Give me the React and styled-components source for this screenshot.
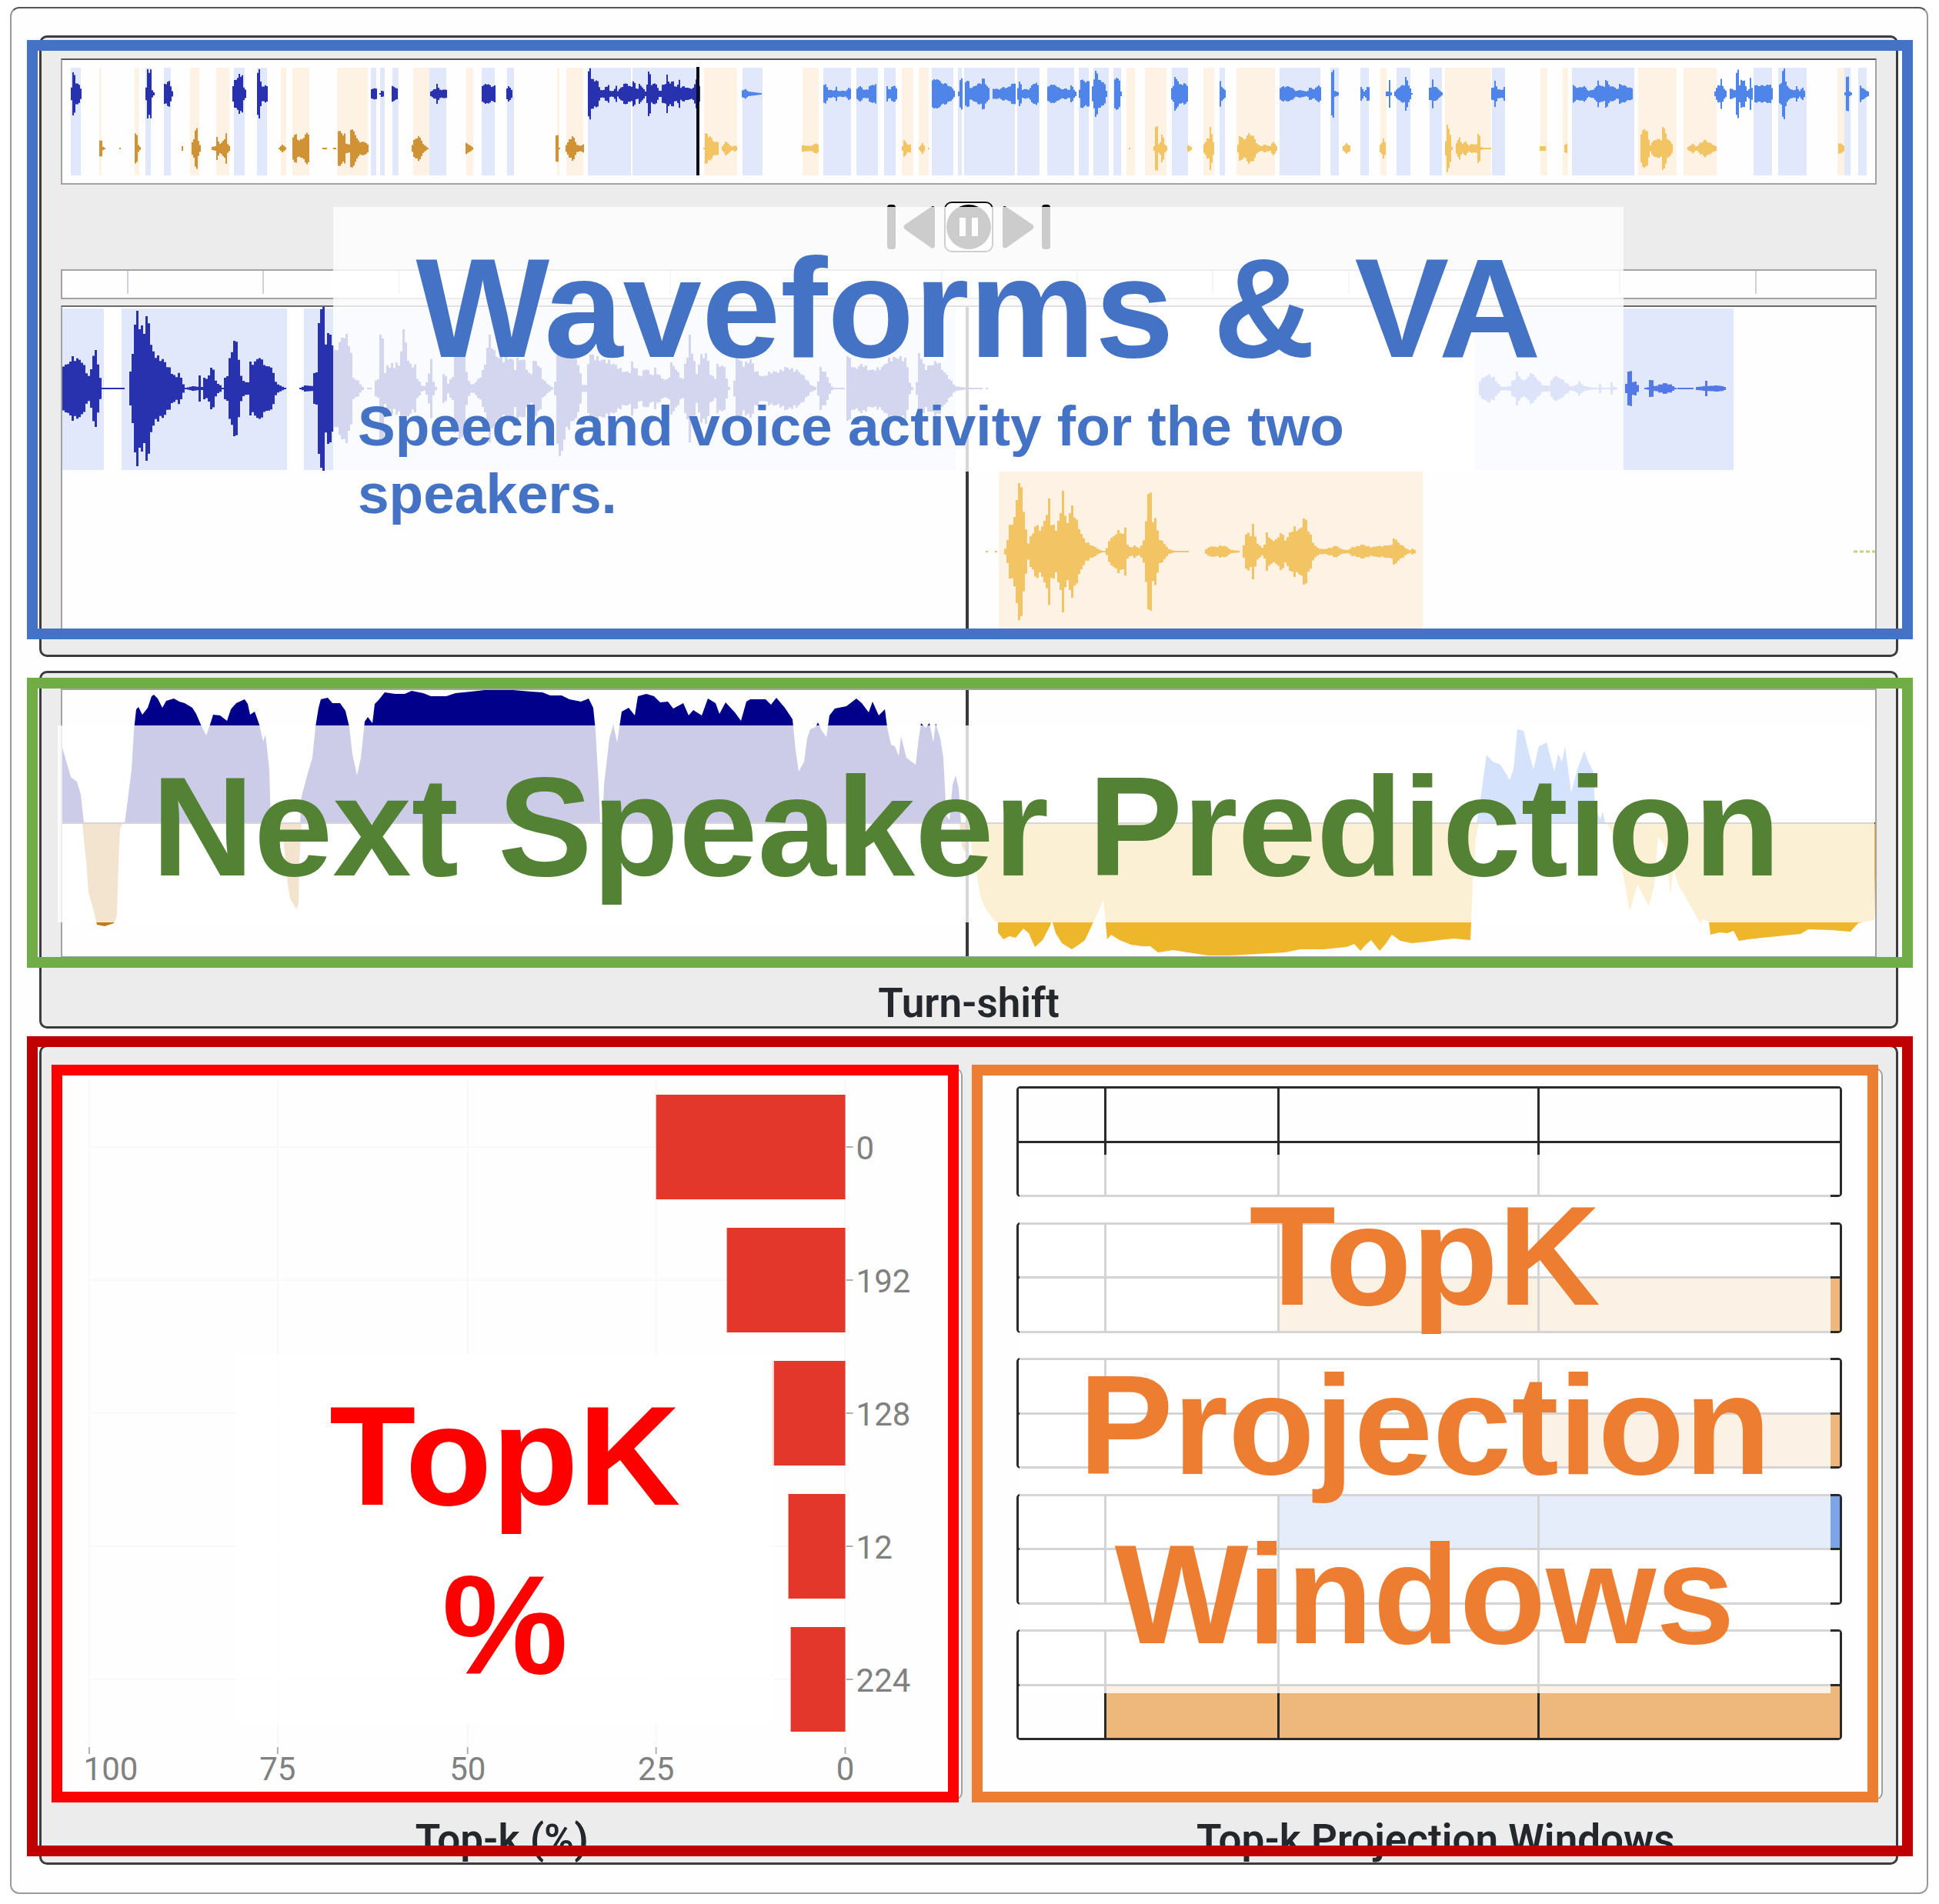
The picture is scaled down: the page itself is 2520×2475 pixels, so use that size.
import React from "react";
import styled, { createGlobalStyle } from "styled-components";

const GlobalStyle = createGlobalStyle`
  *, *::before, *::after { box-sizing: border-box; }
  body { margin: 0; background: #fff; }
`;

const C = {
  blue: "#4472c4",
  green: "#70ad47",
  greenText: "#548235",
  crimson: "#c00000",
  red: "#ff0000",
  orange: "#ed7d31",
  navyWave: "#2832ae",
  skyWave: "#4f84e8",
  amberWave: "#cf9335",
  goldWave: "#f3c463",
};

const Page = styled.div`
  padding: 9px 14px 12px 13px;
  font-family: Roboto, "Liberation Sans", sans-serif;
  color: #24272b;
`;

const Shell = styled.main`
  display: flex;
  flex-direction: column;
  gap: 18px;
  padding: 35px 37px 36px 36px;
  border: 2px solid #9a9a9a;
  border-top-color: #555;
  border-radius: 12px;
  background: #fefefe;
`;

const Panel = styled.section`
  position: relative;
  border: 3px solid #3c3c3c;
  border-radius: 10px;
  background: #ececec;
  padding: ${(p) => p.$pad || "0"};
  margin-top: ${(p) => p.$gap || "0"};
`;

const Plot = styled.div`
  border: 2px solid ${(p) => p.$edge || "#a3a3a3"};
  border-top-color: ${(p) => p.$top || "#6b6b6b"};
  background: #fefefe;
  height: ${(p) => p.$h};
  margin-top: ${(p) => p.$gap || "0"};
`;

const Drawing = styled.svg`
  display: block;
  width: 100%;
  height: 100%;
`;

const Controls = styled.div`
  height: 110px;
  display: flex;
  justify-content: center;
  align-items: center;
  gap: 12px;
`;

const IconButton = styled.button`
  display: flex;
  align-items: center;
  justify-content: center;
  width: ${(p) => p.$w};
  height: 66px;
  padding: 0;
  border: ${(p) => (p.$active ? "2px solid #111" : "0")};
  border-radius: 10px;
  background: ${(p) => (p.$active ? "#fff" : "transparent")};
`;

const PanelTitle = styled.h2`
  margin: 0;
  text-align: center;
  font-size: 53px;
  line-height: 60px;
  font-weight: 600;
  padding: ${(p) => p.$pad || "0"};
`;

const Columns = styled.div`
  display: grid;
  grid-template-columns: 1fr 1fr;
  gap: 17px;
`;

const Column = styled.div`
  position: relative;
`;

const Card = styled.div`
  margin: ${(p) => p.$margin};
  height: 952px;
  border: 2px solid #a0a0a0;
  border-radius: 10px;
  background: #fefefe;
`;

const WindowList = styled(Card)`
  display: flex;
  flex-direction: column;
  justify-content: space-between;
  padding: 22px 51px 76px 51px;
`;

const WindowGrid = styled.div`
  height: 144px;
  display: grid;
  grid-template-columns: 112fr 224fr 337fr 392fr;
  grid-template-rows: 1fr 1fr;
  gap: 3px;
  border: 3px solid #2a2a2a;
  border-radius: 5px;
  background: #2a2a2a;
`;

const Cell = styled.div`
  background: ${(p) => p.$fill};
`;

/* Callouts drawn over the panels */
const Frame = styled.div`
  position: absolute;
  inset: ${(p) => p.$inset};
  border: 14px solid ${(p) => p.$color};
  pointer-events: none;
`;

const Note = styled.div`
  position: absolute;
  inset: ${(p) => p.$inset};
  height: ${(p) => p.$h};
  padding: 21px 32px 0;
  background: rgba(255, 255, 255, 0.8);
  color: ${(p) => p.$color};
  font-family: "Liberation Sans", Arial, sans-serif;
  font-weight: 700;
`;

const NoteTitle = styled.h1`
  margin: 0;
  font-size: 184px;
  line-height: 220px;
  text-align: center;
`;

const NoteText = styled.p`
  margin: 0;
  font-size: 73px;
  line-height: 88px;
`;

/* Each burst is a flat list: x, amplitude, x, amplitude ...
   It is drawn as a row of mirrored bars, one bar per sample step. */
function burstPath(burst, mid, step) {
  const n = burst.length;
  const end = burst[n - 2];
  const at = (x) => {
    for (let i = 0; i + 3 < n; i += 2) {
      const x0 = burst[i];
      const x1 = burst[i + 2];
      if (x >= x0 && x <= x1) {
        const t = x1 === x0 ? 1 : (x - x0) / (x1 - x0);
        return burst[i + 1] + t * (burst[i + 3] - burst[i + 1]);
      }
    }
    return burst[n - 1];
  };
  const tops = [];
  const bottoms = [];
  for (let x = burst[0]; x < end + 1; x += step) {
    let a = at(Math.min(x, end));
    let peak = false;
    for (let i = 0; i < n; i += 2) {
      if (burst[i] >= x && burst[i] < x + step && burst[i + 1] > a) {
        a = burst[i + 1];
        peak = true;
      }
    }
    const wobble = peak || a < 4 ? 1 : 0.84 + 0.2 * Math.abs(Math.sin(x * 12.9898));
    const h = Math.max(1, a * wobble);
    tops.push(`${x} ${mid - h}L${x + step} ${mid - h}`);
    bottoms.unshift(`${x + step} ${mid + h}L${x} ${mid + h}`);
  }
  return `M${tops.join("L")}L${bottoms.join("L")}Z`;
}

function Wave({ bursts, mid, color, step = 2 }) {
  return <path d={bursts.map((b) => burstPath(b, mid, step)).join("")} fill={color} />;
}

function Spans({ spans, y, height, color }) {
  return spans.map(([a, b]) => (
    <rect key={a} x={a} y={y} width={b - a} height={height} fill={color} />
  ));
}

const speechA = [
  [92, 105], [189, 196], [213, 222], [304, 318], [334, 347], [482, 489], [494, 500], [510, 518],
  [558, 580], [626, 643], [659, 668], [764, 820], [822, 909], [965, 991], [1070, 1106], [1113, 1141],
  [1149, 1164], [1211, 1239], [1245, 1250], [1253, 1319], [1322, 1351], [1361, 1396], [1402, 1415],
  [1421, 1441], [1447, 1457], [1523, 1544], [1585, 1592], [1663, 1716], [1729, 1740], [1768, 1779],
  [1815, 1833], [1858, 1874], [1939, 1956], [2043, 2124], [2279, 2303], [2311, 2348], [2397, 2405],
  [2415, 2426],
];

const speechB = [
  [129, 132], [175, 181], [247, 259], [281, 298], [365, 372], [380, 402], [438, 478], [537, 558],
  [606, 615], [724, 727], [736, 758], [915, 958], [1043, 1064], [1172, 1187], [1194, 1207],
  [1464, 1475], [1488, 1516], [1564, 1578], [1607, 1657], [1794, 1802], [1878, 1938], [2002, 2011],
  [2031, 2038], [2129, 2179], [2188, 2231], [2388, 2397],
];

const overviewPastA = [
  [92, 8, 94, 10, 95, 28, 97, 28, 98, 14, 102, 12, 104, 8],
  [189, 8, 191, 12, 192, 32, 195, 32, 196, 6, 199, 2],
  [213, 13, 217, 16, 220, 16, 221, 10, 223, 4],
  [302, 10, 305, 18, 308, 20, 310, 27, 314, 24, 316, 8, 319, 5],
  [334, 32, 336, 32, 337, 18, 340, 10, 344, 11, 347, 9],
  [482, 7, 488, 7], [493, 1, 496, 4, 498, 4], [509, 10, 511, 10, 516, 6],
  [559, 3, 564, 6, 567, 8, 568, 13, 569, 8, 573, 5, 579, 6],
  [626, 10, 631, 13, 640, 10, 643, 11], [658, 7, 661, 10, 664, 5],
  [764, 34, 766, 34, 767, 18, 770, 20, 776, 16, 779, 6, 783, 4, 787, 9, 790, 11, 792, 4, 797, 4, 800, 11,
    802, 4, 806, 8, 811, 13, 815, 13, 821, 8, 822, 17, 825, 16, 826, 7, 829, 6, 831, 13, 834, 8, 837, 5,
    838, 3, 841, 12, 842, 28, 844, 26, 846, 13, 853, 13, 855, 4, 859, 4, 860, 13, 866, 12, 867, 25, 869, 13,
    874, 17, 877, 8, 881, 12, 882, 20, 883, 8, 888, 10, 895, 7, 901, 8, 904, 20, 906, 20, 909, 5],
];

const overviewNextA = [
  [964, 5, 968, 6, 972, 3, 988, 1],
  [1070, 12, 1073, 12, 1075, 6, 1083, 4, 1086, 9, 1088, 4, 1098, 4, 1103, 8, 1105, 6],
  [1113, 8, 1118, 10, 1122, 5, 1127, 6, 1130, 10, 1135, 13, 1138, 13],
  [1152, 10, 1155, 4, 1158, 10, 1162, 10, 1165, 7],
  [1211, 18, 1218, 19, 1222, 15, 1229, 13, 1235, 9, 1239, 5],
  [1245, 3, 1247, 20, 1249, 20, 1250, 2],
  [1254, 18, 1258, 16, 1260, 8, 1266, 10, 1270, 14, 1276, 12, 1277, 20, 1278, 20, 1280, 12, 1285, 8],
  [1290, 7, 1297, 6, 1304, 9, 1309, 8, 1315, 13, 1318, 13, 1319, 10],
  [1322, 8, 1325, 16, 1328, 6, 1337, 6, 1342, 14, 1346, 14, 1349, 10],
  [1361, 9, 1366, 12, 1372, 11, 1378, 6, 1384, 7, 1390, 5, 1392, 11, 1397, 3],
  [1402, 6, 1405, 18, 1414, 16, 1415, 8],
  [1419, 10, 1421, 18, 1424, 18, 1424, 30, 1426, 30, 1427, 18, 1434, 16, 1437, 4],
  [1448, 20, 1454, 20, 1456, 3],
  [1522, 8, 1526, 12, 1527, 22, 1529, 22, 1531, 12, 1538, 14, 1543, 10],
  [1585, 16, 1587, 10, 1591, 5],
  [1663, 8, 1668, 10, 1678, 9, 1682, 4, 1690, 5, 1697, 3, 1702, 8, 1706, 6, 1714, 11, 1716, 8],
  [1730, 30, 1732, 30, 1733, 4, 1739, 2], [1768, 9, 1772, 3, 1777, 9, 1779, 8],
  [1801, 3, 1804, 3, 1805, 18, 1806, 18, 1807, 2], [1812, 3, 1818, 10, 1826, 12, 1827, 22, 1829, 12, 1832, 8, 1834, 1],
  [1857, 8, 1860, 8, 1861, 20, 1863, 10, 1868, 7, 1873, 2],
  [1938, 8, 1942, 8, 1943, 17, 1945, 6, 1951, 5, 1955, 9],
  [2044, 11, 2050, 8, 2058, 10, 2064, 4, 2068, 5, 2075, 10, 2076, 18, 2079, 10, 2086, 10, 2087, 18, 2090, 12,
    2096, 9, 2103, 6, 2105, 13, 2112, 10, 2121, 7],
  [2228, 3, 2232, 12, 2235, 12, 2236, 19, 2238, 10, 2243, 3],
  [2248, 8, 2252, 5, 2255, 5, 2256, 31, 2258, 31, 2259, 6, 2262, 20, 2267, 16, 2269, 4, 2273, 6, 2274, 20, 2276, 8],
  [2280, 11, 2290, 11, 2301, 12, 2303, 3],
  [2312, 12, 2315, 14, 2316, 32, 2318, 32, 2320, 16, 2325, 6, 2333, 5, 2335, 10, 2337, 3, 2342, 8, 2345, 3],
  [2397, 2, 2400, 2, 2400, 22, 2402, 22, 2403, 3, 2406, 1], [2417, 11, 2422, 6, 2427, 3],
];

const overviewPastB = [
  [129, 10, 131, 10, 132, 3, 135, 1], [155, 1, 156, 1], [175, 19, 178, 19, 179, 5, 181, 2], [236, 3, 237, 3],
  [249, 8, 252, 12, 253, 26, 255, 26, 256, 12, 259, 5],
  [275, 2, 280, 3, 282, 15, 284, 5, 290, 10, 292, 12, 293, 19, 294, 19, 295, 6, 298, 3],
  [362, 1, 366, 5, 371, 1],
  [380, 15, 384, 19, 387, 10, 391, 12, 398, 20, 400, 20], [419, 1, 424, 1], [433, 1, 435, 1],
  [439, 24, 443, 20, 448, 20, 449, 6, 454, 6, 455, 24, 460, 24, 462, 14, 466, 9, 476, 8, 478, 2],
  [535, 5, 538, 11, 543, 17, 547, 10, 551, 4, 555, 1], [605, 7, 609, 5, 614, 1],
  [722, 17, 724, 17, 725, 1, 727, 1], [735, 5, 740, 12, 744, 16, 748, 6, 754, 3, 757, 6],
];

const overviewNextB = [
  [914, 1, 917, 20, 922, 16, 926, 10, 932, 8], [938, 3, 943, 9, 948, 4, 951, 2, 955, 4, 957, 2],
  [1042, 4, 1047, 4, 1053, 3, 1060, 7, 1063, 5], [1172, 3, 1174, 11, 1178, 6, 1183, 5],
  [1194, 2, 1198, 7, 1201, 2], [1206, 1, 1207, 1], [1467, 1, 1468, 1],
  [1499, 3, 1501, 3, 1502, 28, 1503, 28, 1505, 6, 1508, 8, 1510, 18, 1513, 6, 1516, 2],
  [1543, 5, 1547, 2], [1564, 6, 1568, 13, 1572, 12, 1573, 28, 1575, 12, 1577, 4],
  [1608, 5, 1611, 16, 1616, 12, 1623, 20, 1628, 16, 1633, 6, 1638, 3, 1642, 5, 1650, 3, 1654, 10, 1658, 3],
  [1745, 3, 1750, 7, 1754, 3], [1793, 5, 1798, 13, 1800, 3],
  [1878, 10, 1880, 30, 1884, 20, 1886, 2], [1892, 8, 1896, 14, 1899, 6, 1904, 9, 1908, 4, 1913, 6, 1920, 5,
    1921, 19, 1923, 19, 1924, 2, 1927, 1, 1936, 1],
  [2001, 3, 2007, 3], [2033, 6, 2035, 6],
  [2132, 18, 2136, 28, 2141, 20, 2143, 3, 2146, 8, 2152, 13, 2158, 11, 2161, 28, 2166, 14, 2172, 6],
  [2193, 2, 2199, 6, 2204, 2, 2210, 8, 2215, 11, 2222, 7, 2229, 3], [2389, 8, 2395, 4],
];

const detailPastA = [
  [81, 32, 86, 30, 90, 38, 94, 42, 100, 38, 104, 38, 110, 25, 114, 16, 118, 25, 120, 45, 124, 50, 127, 30, 130, 5, 132, 1, 161, 1],
  [168, 2, 170, 22, 173, 45, 174, 80, 177, 82, 178, 101, 180, 78, 184, 82, 189, 78, 190, 94, 193, 92, 194, 60, 198, 48,
    203, 42, 210, 38, 218, 28, 224, 18, 229, 14, 231, 22, 236, 8, 240, 1, 250, 3, 256, 2, 259, 17, 261, 2, 264, 2, 266, 14,
    271, 17, 274, 27, 277, 25, 279, 10, 284, 5, 288, 1, 291, 1, 293, 14, 296, 16, 297, 46, 303, 45, 304, 62, 306, 62, 307, 45,
    311, 28, 313, 10, 322, 8, 325, 35, 330, 34, 333, 42, 341, 36, 345, 28, 348, 32, 353, 24, 358, 6, 369, 1],
  [389, 1, 396, 4, 406, 3, 409, 20, 413, 25, 413, 85, 417, 88, 417, 103, 419, 103, 420, 65, 424, 60, 427, 72, 432, 60,
    433, 48, 438, 50, 440, 60, 446, 72, 451, 66, 454, 54, 456, 38, 458, 14, 464, 10, 470, 2, 472, 1],
  [477, 1, 482, 1],
  [487, 10, 492, 12, 494, 70, 497, 70, 498, 18, 503, 30, 508, 32, 512, 28, 514, 34, 518, 28, 520, 54, 523, 74, 526, 66,
    529, 36, 534, 30, 539, 30, 541, 14, 548, 2],
  [550, 3, 554, 8, 556, 22, 558, 22, 559, 38, 561, 12, 564, 3, 567, 1],
  [575, 18, 578, 18, 579, 4, 586, 12, 590, 30, 592, 58, 598, 66, 602, 56, 604, 24, 609, 8, 612, 4, 620, 12, 628, 24,
    632, 56, 636, 70, 642, 44, 650, 40, 664, 40, 668, 28, 672, 40, 682, 36, 684, 20, 690, 20, 694, 36, 700, 32, 703, 14,
    710, 6, 717, 1],
  [720, 10, 723, 34, 725, 72, 728, 88, 733, 60, 740, 48, 750, 34, 754, 14, 756, 5, 762, 4],
  [763, 34, 768, 44, 780, 38, 790, 36, 800, 30, 810, 22, 818, 22, 820, 34, 826, 26, 830, 14, 838, 28, 846, 16, 850, 26,
    858, 14, 864, 11, 870, 14, 872, 34, 878, 24, 886, 12, 890, 32, 894, 40, 896, 70, 899, 44, 904, 20, 910, 44, 918, 46,
    922, 18, 928, 14, 932, 32, 940, 28, 944, 10, 946, 2],
  [953, 10, 957, 40, 965, 32, 975, 38, 980, 24, 990, 15, 1000, 22, 1010, 22, 1020, 28, 1035, 24, 1045, 15, 1052, 5, 1060, 1],
  [1062, 10, 1066, 28, 1072, 20, 1078, 5, 1081, 1, 1095, 1],
  [1100, 5, 1102, 42, 1108, 26, 1120, 32, 1130, 24, 1145, 28, 1155, 40, 1170, 42, 1177, 38, 1180, 10, 1184, 2],
  [1190, 8, 1194, 46, 1200, 28, 1210, 30, 1217, 38, 1224, 24, 1232, 14, 1240, 3, 1256, 1, 1275, 1], [1281, 1, 1283, 1],
];

const detailNextA = [
  [1922, 10, 1928, 16, 1934, 18, 1940, 15, 1946, 6, 1950, 2, 1962, 3, 1966, 10, 1971, 22, 1977, 10, 1983, 12, 1989, 20,
    1995, 14, 2004, 4, 2012, 4, 2018, 17, 2026, 14, 2034, 8, 2040, 2, 2046, 4, 2051, 9, 2058, 3, 2070, 1, 2078, 1,
    2079, 6, 2081, 1, 2092, 1, 2094, 8, 2096, 2, 2100, 1],
  [2112, 3, 2114, 6, 2117, 8, 2117, 22, 2118, 22, 2119, 9, 2124, 9, 2128, 3],
  [2137, 1, 2144, 2, 2145, 11, 2146, 11, 2148, 3, 2155, 5, 2163, 7, 2170, 5, 2176, 1], [2180, 1, 2200, 1],
  [2204, 2, 2214, 3, 2216, 10, 2217, 3, 2230, 4, 2238, 3, 2242, 1],
];

const detailNextB = [
  [1281, 1, 1283, 1], [1293, 1, 1295, 1],
  [1305, 4, 1310, 15, 1312, 35, 1318, 45, 1320, 75, 1325, 89, 1328, 75, 1330, 38, 1335, 12, 1340, 20, 1344, 35, 1352, 30,
    1357, 40, 1362, 67, 1365, 40, 1371, 28, 1376, 40, 1379, 50, 1380, 94, 1382, 94, 1383, 45, 1388, 35, 1391, 50, 1393, 60,
    1398, 40, 1402, 28, 1408, 15, 1416, 9, 1424, 5, 1430, 1, 1436, 1, 1440, 15, 1447, 20, 1454, 28, 1458, 22, 1461, 35,
    1463, 10, 1468, 5, 1474, 8, 1480, 4, 1484, 8, 1488, 38, 1491, 45, 1492, 75, 1494, 75, 1495, 35, 1500, 46, 1504, 20,
    1512, 10, 1518, 3, 1525, 1, 1544, 1],
  [1566, 3, 1572, 7, 1580, 6, 1585, 8, 1592, 7, 1598, 2, 1610, 1],
  [1615, 8, 1618, 25, 1624, 22, 1627, 36, 1631, 14, 1637, 6, 1641, 5, 1646, 25, 1650, 15, 1658, 16, 1664, 24, 1670, 15,
    1676, 25, 1682, 33, 1688, 28, 1695, 43, 1700, 28, 1705, 12, 1710, 5, 1720, 3, 1728, 5, 1735, 8, 1742, 3, 1750, 2,
    1758, 6, 1770, 9, 1780, 6, 1790, 7, 1800, 8, 1808, 9, 1811, 17, 1818, 10, 1826, 5, 1830, 1, 1834, 4, 1839, 1],
];

const areas = [
  ["#00008b", "81 1070 81 972 84 982 92 1010 100 1016 105 1033 109 1070"],
  ["#00008b", "162 1070 166 1040 171 1000 174 950 177 922 180 919 185 929 192 920 197 905 200 903 205 908 211 920 216 911 226 908 233 912 240 914 250 920 255 928 261 942 268 956 273 942 277 929 286 930 295 937 300 922 307 914 318 909 322 915 325 929 331 925 337 942 342 964 345 955 350 1000 352 1070"],
  ["#00008b", "390 1070 392 1035 400 1005 406 985 410 945 414 920 417 909 426 907 432 914 442 914 449 924 454 945 458 980 464 1008 469 985 474 938 478 932 484 940 487 915 492 910 500 900 514 902 526 902 535 898 550 901 560 905 570 905 580 905 592 901 612 899 630 897 655 896 690 899 705 900 715 904 730 904 740 909 755 912 765 908 771 920 774 950 778 1020 780 1070"],
  ["#00008b", "783 1070 785 1020 792 960 797 942 802 965 808 925 817 920 825 930 829 905 840 902 850 905 858 913 868 912 875 921 888 914 895 930 901 923 912 930 920 908 930 914 935 928 943 913 955 926 963 937 970 912 975 909 995 909 1002 916 1009 907 1020 920 1030 935 1034 975 1038 1003 1045 990 1049 960 1053 948 1060 945 1063 939 1068 950 1074 958 1078 930 1085 921 1100 918 1113 908 1120 914 1129 926 1134 912 1142 930 1150 922 1153 945 1158 968 1163 970 1168 983 1171 957 1178 985 1190 994 1194 960 1197 940 1203 946 1208 940 1213 965 1216 940 1222 960 1226 985 1230 1060 1234 1066 1238 1020 1242 1008 1246 1025 1249 1070"],
  ["#c27a17", "107 1070 112 1120 115 1160 122 1185 126 1202 136 1204 148 1200 152 1190 154 1120 156 1077 160 1070"],
  ["#c27a17", "363 1070 368 1090 374 1150 377 1168 385 1182 388 1175 389 1120 392 1070"],
  ["#c27a17", "1247 1070 1250 1100 1256 1110 1256 1070"],
  ["#eeb62a", "1258 1070 1264 1110 1270 1140 1274 1165 1280 1180 1293 1198 1297 1198 1297 1212 1304 1221 1312 1217 1320 1219 1330 1207 1337 1213 1345 1231 1355 1222 1365 1203 1367 1196 1372 1213 1380 1226 1393 1234 1402 1228 1410 1222 1418 1205 1425 1190 1434 1170 1437 1200 1439 1221 1444 1215 1455 1222 1470 1228 1485 1230 1495 1230 1505 1238 1525 1235 1550 1239 1570 1242 1600 1242 1635 1240 1670 1238 1690 1234 1720 1234 1750 1231 1760 1227 1768 1236 1775 1228 1782 1222 1793 1236 1800 1228 1809 1215 1820 1223 1835 1226 1855 1224 1870 1222 1890 1220 1911 1222 1912 1200 1914 1150 1918 1090 1922 1070"],
  ["#eeb62a", "2088 1070 2100 1090 2110 1140 2118 1185 2128 1150 2143 1178 2150 1150 2155 1088 2164 1100 2171 1163 2175 1130 2181 1150 2190 1165 2205 1192 2210 1200 2213 1195 2221 1198 2223 1215 2235 1212 2245 1213 2253 1210 2260 1223 2272 1221 2290 1219 2310 1217 2340 1214 2350 1208 2380 1209 2405 1211 2415 1200 2436 1196 2438 1070"],
  ["#2e70e8", "1919 1070 1924 1040 1928 1010 1932 981 1940 990 1950 994 1957 1005 1962 1014 1967 1000 1972 948 1980 950 1986 975 1993 1000 2000 970 2010 965 2020 1003 2025 980 2030 990 2034 970 2042 1030 2050 1000 2059 976 2065 992 2071 1003 2073 1050 2080 1065 2083 1055 2086 1070"],
];

const bars = [
  { label: "0", x: 853 },
  { label: "192", x: 945 },
  { label: "128", x: 1004 },
  { label: "12", x: 1025 },
  { label: "224", x: 1028 },
];

const ticks = [
  { label: "100", x: 116, textX: 144 },
  { label: "75", x: 361 },
  { label: "50", x: 608 },
  { label: "25", x: 853 },
  { label: "0", x: 1099 },
];

const W = "#fefefe";
const O = "#eeb87d";
const B = "#7da4ea";
const windows = [
  [W, W, W, W, W, W, W, W],
  [W, W, W, W, W, W, O, O],
  [W, W, W, W, W, W, W, O],
  [W, W, B, B, W, W, W, W],
  [W, W, W, W, W, O, O, O],
];

function Overview() {
  return (
    <Plot $h="164px" $top="#555">
      <Drawing viewBox="81 78 2356 160" preserveAspectRatio="none">
        <Spans spans={speechB} y={88} height={140} color="#fdf2e3" />
        <Spans spans={speechA} y={88} height={140} color="#e2e8fc" />
        <Wave bursts={overviewPastA} mid={122} color={C.navyWave} />
        <Wave bursts={overviewNextA} mid={122} color={C.skyWave} />
        <Wave bursts={overviewPastB} mid={193} color={C.amberWave} />
        <Wave bursts={overviewNextB} mid={193} color={C.goldWave} />
        <rect x="905" y="87" width="4" height="141" fill="#0d0d16" />
      </Drawing>
    </Plot>
  );
}

function Ruler() {
  return (
    <Plot $h="39px" $gap="0" $top="#a3a3a3">
      <Drawing viewBox="81 352 2356 35" preserveAspectRatio="none">
        {Array.from({ length: 13 }, (_, i) => (
          <rect key={i} x={165 + Math.round(i * 176.3)} y="352" width="2" height="30" fill="#d2d2d6" />
        ))}
      </Drawing>
    </Plot>
  );
}

function Detail() {
  return (
    <Plot $h="427px" $gap="8px">
      <Drawing viewBox="81 399 2356 423" preserveAspectRatio="none">
        <Spans spans={[[81, 135], [158, 373], [395, 1242], [1917, 2253]]} y={401} height={210} color="#e2e8fc" />
        <Spans spans={[[1298, 1849]]} y={613} height={206} color="#fdf2e3" />
        <Wave bursts={detailPastA} mid={505} color={C.navyWave} step={3} />
        <Wave bursts={detailNextA} mid={505} color="#5478e6" step={3} />
        <Wave bursts={detailNextB} mid={717} color={C.goldWave} step={3} />
        <path d="M2409 717H2437" stroke="#c9cf7a" strokeWidth="3" strokeDasharray="5 3" />
        <rect x="1255" y="399" width="4" height="423" fill="#3a3a3a" />
      </Drawing>
    </Plot>
  );
}

function Player() {
  return (
    <Controls>
      <IconButton $w="62px" aria-label="Previous">
        <svg width="62" height="60" viewBox="0 0 62 60">
          <rect x="0" y="1" width="11" height="58" rx="4" />
          <path d="M57 4 23 27Q20 30 23 33L57 57Q62 59 62 53V8Q62 1 57 4Z" />
        </svg>
      </IconButton>
      <IconButton $w="64px" $active aria-label="Pause">
        <svg width="60" height="60" viewBox="0 0 60 60">
          <circle cx="30" cy="30" r="29" />
          <path d="M18 18h8v24h-8zM34 18h8v24h-8z" fill="#fff" />
        </svg>
      </IconButton>
      <IconButton $w="62px" aria-label="Next">
        <svg width="62" height="60" viewBox="0 0 62 60">
          <path d="M5 4 39 27Q42 30 39 33L5 57Q0 59 0 53V8Q0 1 5 4Z" />
          <rect x="51" y="1" width="11" height="58" rx="4" />
        </svg>
      </IconButton>
    </Controls>
  );
}

function Prediction() {
  return (
    <Plot $h="350px" $top="#a3a3a3">
      <Drawing viewBox="81 897 2356 346" preserveAspectRatio="none">
        {areas.map(([fill, points]) => (
          <polygon key={points} points={points} fill={fill} />
        ))}
        <rect x="81" y="1069" width="2357" height="2" fill="#333" />
        <rect x="1255" y="897" width="4" height="346" fill="#3a3a3a" />
      </Drawing>
    </Plot>
  );
}

function TopKChart() {
  return (
    <Drawing viewBox="73 1390 1176 948" preserveAspectRatio="none" fontFamily="Roboto, sans-serif" fontSize="42" fill="#808080">
      {ticks.map((t) => (
        <g key={t.label}>
          <rect x={t.x - 1} y="1404" width="2" height="866" fill="#f8f8fa" />
          <rect x={t.x - 1} y="2271" width="2" height="9" fill="#b0b0b0" />
          <text x={t.textX || t.x} y="2314" textAnchor="middle">{t.label}</text>
        </g>
      ))}
      {bars.map((b, i) => {
        const y = 1423 + i * 173;
        return (
          <g key={b.label}>
            <rect x="116" y={y + 67} width="983" height="2" fill="#f8f8fa" />
            <rect x={b.x} y={y} width={1099 - b.x} height="136" fill="#e4372b" />
            <rect x="1100" y={y + 67} width="9" height="2" fill="#b0b0b0" />
            <text x="1113" y={y + 84}>{b.label}</text>
          </g>
        );
      })}
    </Drawing>
  );
}

export default function App() {
  return (
    <>
      <GlobalStyle />
      <Page>
        <Shell>
          <Panel $pad="27px 25px 27px 25px">
            <Overview />
            <Player />
            <Ruler />
            <Detail />
            <Note $inset="220px 354px auto 379px" $h="344px" $color={C.blue}>
              <NoteTitle>Waveforms &amp; VA</NoteTitle>
              <NoteText>Speech and voice activity for the two speakers.</NoteText>
            </Note>
            <Frame $inset="3px -22px 20px -19px" $color={C.blue} />
          </Panel>

          <Panel $pad="20px 25px 0 25px">
            <Prediction />
            <PanelTitle $pad="29px 0 0">Turn-shift</PanelTitle>
            <Note $inset="68px 28px auto 21px" $h="256px" $color={C.greenText}>
              <NoteTitle>Next Speaker Prediction</NoteTitle>
            </Note>
            <Frame $inset="6px -22px 76px -19px" $color={C.green} />
          </Panel>

          <Panel $gap="3px">
            <Columns>
              <Column>
                <Card $margin="27px 0 0 17px">
                  <TopKChart />
                </Card>
                <PanelTitle $pad="21px 0 0">Top-k (%)</PanelTitle>
                <Note $inset="400px 245px auto 253px" $h="480px" $color={C.red}>
                  <NoteTitle>TopK<br />%</NoteTitle>
                </Note>
                <Frame $inset="23px 5px 78px 13px" $color={C.red} />
              </Column>
              <Column>
                <WindowList $margin="27px 17px 0 0">
                  {windows.map((cells, i) => (
                    <WindowGrid key={i}>
                      {cells.map((fill, j) => (
                        <Cell key={j} $fill={fill} />
                      ))}
                    </WindowGrid>
                  ))}
                </WindowList>
                <PanelTitle $pad="21px 0 0">Top-k Projection Windows</PanelTitle>
                <Note $inset="140px 85px auto 57px" $h="700px" $color={C.orange}>
                  <NoteTitle>TopK Projection Windows</NoteTitle>
                </Note>
                <Frame $inset="23px 23px 78px -5px" $color={C.orange} />
              </Column>
            </Columns>
            <Frame $inset="-14px -22px 8px -19px" $color={C.crimson} />
          </Panel>
        </Shell>
      </Page>
    </>
  );
}
